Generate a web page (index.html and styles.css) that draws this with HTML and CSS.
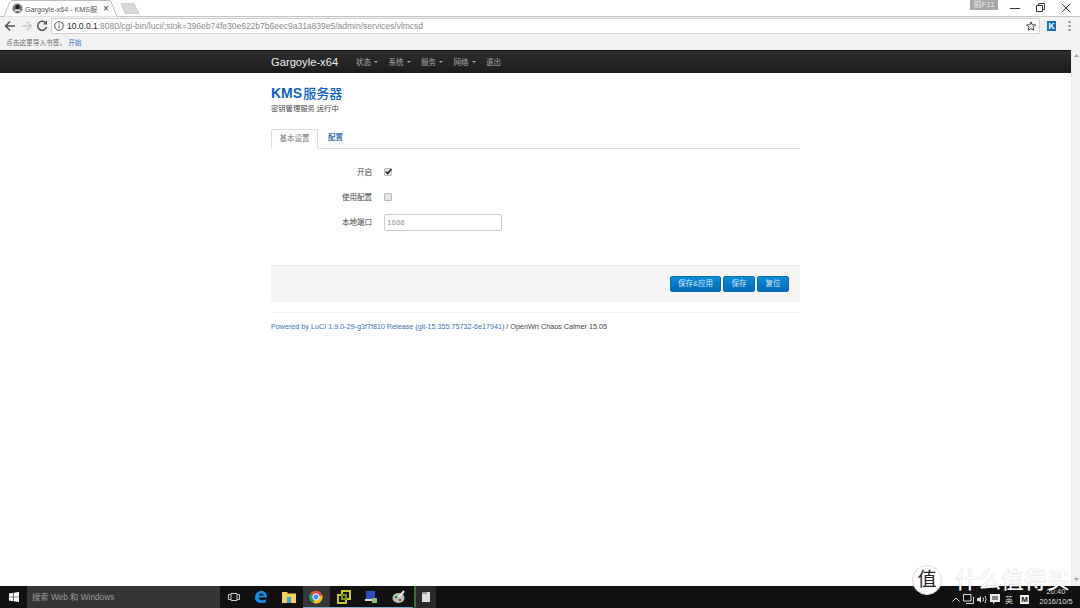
FILE: index.html
```html
<!DOCTYPE html>
<html lang="zh">
<head>
<meta charset="utf-8">
<title>Gargoyle-x64 - KMS服务器</title>
<link rel="stylesheet" href="styles.css">
</head>
<body>
<header class="chrome">
  <div class="tabstrip">
    <div class="tab">
      <svg class="tab-shape" width="118" height="17" viewBox="0 0 118 17"><path d="M0 16.500H2L8 1.500Q8.500 .5 10 .5H107Q108.500 .5 109 1.500L115 16.500" fill="#fff" stroke="#bdbdbd"/></svg>
      <svg class="favicon" width="11" height="11" viewBox="0 0 11 11"><circle cx="5.500" cy="5.500" r="5" fill="#777"/><circle cx="5.500" cy="4" r="2.200" fill="#222"/><path d="M2.500 8.500Q5.500 5.500 8.500 8.500" fill="none" stroke="#eee" stroke-width="1.200"/></svg>
      <span class="tab-title">Gargoyle-x64 - KMS服</span>
      <span class="tab-close">×</span>
    </div>
    <svg class="newtab" width="20" height="11" viewBox="0 0 20 11"><path d="M1 .5H14L19 10.500H5Z" fill="#d9d9d9" stroke="#cfcfcf"/></svg>
    <div class="win-controls">
      <span class="ime">前F11</span>
      <svg width="10" height="10" viewBox="0 0 10 10"><path d="M0 5.500H10" stroke="#333"/></svg>
      <svg width="10" height="10" viewBox="0 0 10 10"><path d="M2.500 2.500V.5H8.500V6.500H6.500M.5 2.500H6.500V8.500H.5Z" fill="none" stroke="#333"/></svg>
      <svg width="10" height="10" viewBox="0 0 10 10"><path d="M1 1L9 9M9 1L1 9" stroke="#333"/></svg>
    </div>
  </div>
  <div class="toolbar">
    <svg class="nav-icon" width="12" height="12" viewBox="0 0 12 12"><path d="M11 6H2M6 1.500L1.500 6L6 10.500" fill="none" stroke="#555" stroke-width="1.500"/></svg>
    <svg class="nav-icon" width="12" height="12" viewBox="0 0 12 12"><path d="M1 6H10M6 1.500L10.500 6L6 10.500" fill="none" stroke="#ccc" stroke-width="1.500"/></svg>
    <svg class="nav-icon" width="12" height="12" viewBox="0 0 12 12"><path d="M10 3.500A4.500 4.500 0 1 0 10.500 7" fill="none" stroke="#555" stroke-width="1.500"/><path d="M7 4.500H11V.5Z" fill="#555"/></svg>
    <div class="omnibox">
      <svg class="info" width="10" height="10" viewBox="0 0 10 10"><circle cx="5" cy="5" r="4.300" fill="none" stroke="#555"/><path d="M5 4.500V7.500M5 2.500V3.500" stroke="#555"/></svg>
      <span class="url"><b>10.0.0.1</b>:8080/cgi-bin/luci/;stok=396eb74fe30e622b7b6eec9a31a839e5/admin/services/vlmcsd</span>
      <svg class="star" width="10" height="10" viewBox="0 0 10 10"><path d="M5 .8L6.200 3.800L9.500 4L7 6.100L7.800 9.300L5 7.600L2.200 9.300L3 6.100L.5 4L3.800 3.800Z" fill="none" stroke="#444"/></svg>
    </div>
    <span class="ext">K</span>
    <svg class="menu-dots" width="3" height="10" viewBox="0 0 3 10"><path d="M.5 1H2.500M.5 5H2.500M.5 9H2.500" stroke="#666" stroke-width="1.500"/></svg>
  </div>
  <div class="bookmarks">点击这里导入书签。<a class="bm-link">开始</a></div>
</header>

<div class="viewport">
  <div class="page">
    <nav class="navbar">
      <div class="container nav-inner">
        <span class="brand">Gargoyle-x64</span>
        <ul class="nav-menu">
          <li>状态<i class="caret"></i></li>
          <li>系统<i class="caret"></i></li>
          <li>服务<i class="caret"></i></li>
          <li>网络<i class="caret"></i></li>
          <li>退出</li>
        </ul>
      </div>
    </nav>

    <main class="content">
      <div class="container">
        <h2 class="page-title">KMS<span class="title-cjk">服务器</span></h2>
        <p class="page-desc">密钥管理服务 运行中</p>
        <ul class="tabs">
          <li class="tabs-item active">基本设置</li>
          <li class="tabs-item">配置</li>
        </ul>
        <form class="form">
          <div class="row">
            <label class="row-label">开启</label>
            <span class="check checked"><svg width="7" height="7" viewBox="0 0 7 7"><path d="M.8 3.500L2.700 5.500L6.300 1" fill="none" stroke="#222" stroke-width="1.500"/></svg></span>
          </div>
          <div class="row">
            <label class="row-label">使用配置</label>
            <span class="check"></span>
          </div>
          <div class="row">
            <label class="row-label">本地端口</label>
            <span class="text-input">1688</span>
          </div>
        </form>
        <div class="actions">
          <button class="btn wide" type="button">保存&amp;应用</button>
          <button class="btn" type="button">保存</button>
          <button class="btn" type="button">复位</button>
        </div>
        <footer class="foot"><a class="foot-link">Powered by LuCI 1.9.0-29-g3f7f810 Release (git-15.355.75732-6e17941)</a> / OpenWrt Chaos Calmer 15.05</footer>
      </div>
    </main>
  </div>
  <div class="scrollbar">
    <svg width="5" height="3" viewBox="0 0 5 3"><path d="M2.500 0L5 3H0Z" fill="#a0a0a0"/></svg>
    <svg width="5" height="3" viewBox="0 0 5 3"><path d="M2.500 3L5 0H0Z" fill="#a0a0a0"/></svg>
  </div>
</div>

<div class="taskbar">
  <span class="start"><svg width="10" height="10" viewBox="0 0 10 10"><path d="M0 1.400L4.300 .8V4.700H0ZM4.900 .7L10 0V4.700H4.900ZM0 5.300H4.300V9.200L0 8.600ZM4.900 5.300H10V10L4.900 9.300Z" fill="#fff"/></svg></span>
  <span class="search">搜索 Web 和 Windows</span>
  <span class="tb-item"><svg width="12" height="10" viewBox="0 0 12 10"><path d="M3 1.500H9V8.500H3ZM3 2.500H.5V7.500H3M9 2.500H11.500V7.500H9" fill="none" stroke="#ccc"/></svg></span>
  <span class="tb-item"><svg width="14" height="14" viewBox="0 0 14 14"><path d="M1 8C1 3.500 4 1 7.500 1C11 1 13 3.500 13 7.500H4.500C4.800 10.500 8.500 11 12 9.300V12.200C7 14.200 1 12.500 1 8ZM4.600 5.500H9.700C9.500 3 5.200 3 4.600 5.500Z" fill="#1a8ee0"/></svg></span>
  <span class="tb-item"><svg width="14" height="12" viewBox="0 0 14 12"><path d="M0 1H5L6 2.500H14V12H0Z" fill="#f4cf5f"/><path d="M5 6H9V12H5Z" fill="#3fa0d8"/></svg></span>
  <span class="tb-item tb-active tb-run"><svg width="14" height="14" viewBox="0 0 14 14"><circle cx="7" cy="7" r="6.500" fill="#dd4b3e"/><path d="M7 7L13.300 5.500A6.500 6.500 0 0 1 4 12.800Z" fill="#f4c20d"/><path d="M7 7L4 12.800A6.500 6.500 0 0 1 1.300 3.500Z" fill="#1da362"/><circle cx="7" cy="7" r="3.200" fill="#4a8af4" stroke="#fff"/></svg></span>
  <span class="tb-item tb-run"><svg width="14" height="14" viewBox="0 0 14 14"><path d="M5 1H13V9H9V13H1V5H5Z" fill="none" stroke="#c7c728" stroke-width="2"/><path d="M5 5H9V9H5Z" fill="none" stroke="#7c8f1e" stroke-width="2"/></svg></span>
  <span class="tb-item tb-run"><svg width="14" height="14" viewBox="0 0 14 14"><rect x="2" y="1" width="9" height="8" fill="#2b4fc0"/><rect x="1" y="9" width="10" height="2" fill="#ddd"/><rect x="8" y="8" width="5" height="5" fill="#8bbf6a"/></svg></span>
  <span class="tb-item tb-run"><svg width="14" height="14" viewBox="0 0 14 14"><ellipse cx="6.500" cy="8" rx="6" ry="5" fill="#b9c4b4"/><circle cx="4" cy="7" r="1.200" fill="#2f7f3f"/><circle cx="8" cy="10" r="1.200" fill="#c33"/><path d="M7 7L12 1" stroke="#e8e8e8" stroke-width="2"/></svg></span>
  <span class="tb-item tb-open"><svg width="8" height="11" viewBox="0 0 8 11"><path d="M0 1H8V11H0Z" fill="#ddd"/><path d="M0 1H5V3H0Z" fill="#999"/></svg></span>
  <div class="tray">
    <svg width="8" height="5" viewBox="0 0 8 5"><path d="M.5 4.500L4 1L7.500 4.500" fill="none" stroke="#ddd"/></svg>
    <svg width="11" height="10" viewBox="0 0 11 10"><path d="M.5 .5H8V7H.5ZM3 9.500H10.500V3" fill="none" stroke="#ddd"/></svg>
    <svg width="10" height="9" viewBox="0 0 10 9"><path d="M0 3H2L4 1V8L2 6H0Z" fill="#ddd"/><path d="M6 2.500Q7 4.500 6 6.500M8 1Q10 4.500 8 8" fill="none" stroke="#ddd"/></svg>
    <svg width="10" height="10" viewBox="0 0 10 10"><path d="M0 0H10V8H5L3 10V8H0Z" fill="#eee"/><path d="M2 3H8M2 5H8" stroke="#222"/></svg>
    <span class="tray-text">英</span>
    <span class="tray-m">M</span>
    <div class="clock"><span>20:40</span><span>2016/10/5</span></div>
  </div>
</div>

<div class="watermark">
  <span class="wm-circle">值</span>
  <span class="wm-text">什么值得买</span>
</div>
</body>
</html>
```
FILE: styles.css
```css
* { box-sizing: border-box; }
html, body { margin: 0; padding: 0; }
body {
  width: 1080px;
  height: 608px;
  overflow: hidden;
  display: flex;
  flex-direction: column;
  background: #fff;
  font-family: "Liberation Sans", "Noto Sans CJK SC", sans-serif;
  color: #333;
  position: relative;
}
svg { display: block; flex: none; }

/* browser chrome */
.chrome { flex: none; height: 50px; background: #f2f2f2; }
.tabstrip {
  height: 17px;
  background: #fff;
  display: flex;
  align-items: flex-end;
  position: relative;
  border-bottom: 1px solid #c4c4c4;
}
.tab {
  width: 118px;
  height: 17px;
  margin-left: 2px;
  display: flex;
  align-items: center;
  position: relative;
  padding-left: 10px;
  margin-bottom: -1px;
}
.tab-shape { position: absolute; left: 0; top: 0; }
.favicon { position: relative; margin-right: 2px; }
.tab-title { position: relative; font-size: 7.200px; color: #555; width: 78px; white-space: nowrap; }
.tab-close { position: relative; font-size: 10px; color: #333; line-height: 10px; }
.newtab { margin: 0 0 2px 0; align-self: flex-end; }
.win-controls {
  margin-left: auto;
  align-self: flex-start;
  display: flex;
  align-items: center;
  height: 12px;
  margin-top: 2px;
  padding-right: 9px;
  gap: 15.500px;
}
.ime {
  width: 28px;
  height: 10px;
  align-self: flex-start;
  margin-top: -2px;
  margin-right: -3.500px;
  background: #a8a8a8;
  color: #e8e8e8;
  font-size: 8px;
  line-height: 10px;
  text-align: center;
}
.toolbar {
  height: 18px;
  background: #f2f2f2;
  display: flex;
  align-items: center;
  padding-left: 4px;
}
.nav-icon { margin-right: 5px; }
.nav-icon:nth-child(2) { margin-right: 3px; }
.nav-icon:nth-child(3) { margin-right: 3px; }
.omnibox {
  width: 989px;
  height: 16px;
  background: #fff;
  border: 1px solid #d0d0d0;
  border-radius: 1px;
  display: flex;
  align-items: center;
  padding: 0 3px 0 2px;
}
.info { margin-right: 3px; }
.url { flex: 1; font-size: 8.500px; color: #8a8a8a; white-space: nowrap; }
.url b { font-weight: 400; color: #222; }
.ext {
  margin-left: 7px;
  width: 9px;
  height: 10px;
  background: #1573b8;
  color: #fff;
  font-size: 8.500px;
  font-weight: 700;
  line-height: 10px;
  text-align: center;
}
.menu-dots { margin-left: 12px; }
.bookmarks {
  height: 15px;
  padding-left: 6px;
  font-size: 6.700px;
  line-height: 15px;
  color: #666;
}
.bm-link { margin-left: 2px; color: #3a6fc4; }

/* page area with its scrollbar */
.viewport { flex: 1; min-height: 0; display: flex; }
.page { flex: 1; min-width: 0; display: flex; flex-direction: column; }
.scrollbar {
  flex: none;
  width: 9px;
  background: #f1f1f1;
  border-left: 1px solid #ececec;
  display: flex;
  flex-direction: column;
  justify-content: space-between;
  align-items: center;
  padding: 4px 0 5px;
}

/* top nav */
.navbar {
  flex: none;
  height: 23px;
  padding-bottom: 1px;
  background: linear-gradient(#2e2e2e, #1c1c1c);
  border-top: 1px solid #111;
}
.container { width: 529px; margin-left: 271px; }
.nav-inner { display: flex; align-items: center; height: 100%; }
.brand { font-size: 11.200px; color: #eee; width: 85px; }
.nav-menu { list-style: none; margin: 0; padding: 0; display: flex; gap: 10.500px; }
.nav-menu li { font-size: 7.500px; color: #aaa; display: flex; align-items: center; }
.caret {
  width: 0;
  height: 0;
  margin-left: 3px;
  border-left: 2px solid transparent;
  border-right: 2px solid transparent;
  border-top: 2px solid #aaa;
}

/* content */
.content { flex: 1; min-height: 0; }
.page-title {
  margin: 12px 0 0;
  font-size: 14px;
  line-height: 17px;
  font-weight: 700;
  color: #0f5fc0;
}
.title-cjk { font-size: 13px; font-weight: 500; margin-left: 1px; }
.page-desc { margin: 1px 0 0; font-size: 7.300px; line-height: 11px; color: #444; }
.tabs {
  list-style: none;
  margin: 15px 0 0;
  padding: 0;
  display: flex;
  height: 20px;
  border-bottom: 1px solid #ddd;
}
.tabs-item {
  width: 47px;
  height: 20px;
  font-size: 7.500px;
  line-height: 17px;
  text-align: center;
  color: #2a6ea8;
  font-weight: 700;
}
.tabs-item:not(.active) { width: 29px; margin-left: 3px; }
.tabs-item.active {
  font-weight: 400;
  color: #777;
  background: #fff;
  border: 1px solid #ddd;
  border-bottom-color: #fff;
  border-radius: 2px 2px 0 0;
}
.form { padding-top: 14px; display: flex; flex-direction: column; gap: 8px; }
.row { display: flex; align-items: center; height: 17px; }
.row-label { width: 101px; text-align: right; font-size: 7.500px; color: #444; }
.check {
  margin-left: 12px;
  width: 8px;
  height: 8px;
  background: #e4e4e4;
  border: 1px solid #bbb;
  border-radius: 1px;
  display: flex;
  align-items: center;
  justify-content: center;
}
.check svg { margin: -1px; }
.text-input {
  margin: 1px 0 0 12px;
  width: 118px;
  height: 17px;
  border: 1px solid #ccc;
  border-radius: 2px;
  padding-left: 2px;
  font-size: 8px;
  line-height: 15px;
  color: #999;
}
.actions {
  margin-top: 35px;
  height: 37px;
  background: #f5f5f5;
  border-top: 1px solid #e8e8e8;
  display: flex;
  justify-content: flex-end;
  align-items: flex-start;
  gap: 2px;
  padding: 9.500px 11px 0 0;
}
.btn {
  width: 32px;
  height: 16px;
  padding: 0;
  border: 1px solid #0a6cb0;
  border-radius: 2px;
  background: linear-gradient(#0a8cdc, #0568b8);
  color: #d8e8f4;
  font-family: inherit;
  font-size: 7.500px;
  line-height: 14px;
}
.btn.wide { width: 51px; }
.foot {
  margin-top: 10px;
  padding-top: 9px;
  border-top: 1px solid #f4f4f4;
  font-size: 7.200px;
  line-height: 10px;
  color: #444;
  white-space: nowrap;
}
.foot-link { color: #3a70b4; }

/* taskbar */
.taskbar {
  flex: none;
  height: 22px;
  background: #111;
  display: flex;
  align-items: center;
  position: relative;
}
.start { width: 27px; height: 22px; display: flex; align-items: center; justify-content: center; }
.search {
  width: 193px;
  height: 22px;
  background: #353535;
  color: #9a9a9a;
  font-size: 8.300px;
  line-height: 22px;
  padding-left: 5px;
}
.tb-item { width: 27.500px; height: 22px; display: flex; align-items: center; justify-content: center; border-bottom: 1px solid transparent; }
.tb-run { border-bottom-color: #7aa8c8; }
.tb-active { background: #363636; }
.tb-open { width: 22px; margin-left: 1px; background: #2a2a2a; border-left: 2px solid #3c6e3c; }
.tray { margin-left: auto; display: flex; align-items: center; gap: 3px; padding-right: 4px; padding-top: 4px; }
.tray-text { font-size: 8px; color: #ddd; margin: 0 4px 0 2px; }
.tray-m { width: 9px; height: 9px; background: #eee; color: #222; font-size: 8px; line-height: 9px; text-align: center; font-weight: 700; }
.clock { display: flex; flex-direction: column; align-items: center; margin-left: 4px; font-size: 7.500px; line-height: 10px; color: #ddd; width: 40px; margin-top: -4px; }

/* watermark over the page */
.watermark {
  position: absolute;
  left: 912px;
  top: 565px;
  display: flex;
  align-items: center;
  color: #fff;
  text-shadow: 0 0 1px rgba(120,120,120,.6);
}
.wm-circle {
  width: 30px;
  height: 30px;
  border-radius: 50%;
  background: #fff;
  color: #222;
  font-size: 19px;
  line-height: 28px;
  text-align: center;
  border: 1px solid #ddd;
  text-shadow: none;
}
.wm-text { margin-left: 13px; font-size: 23px; line-height: 30px; white-space: nowrap; }
```
